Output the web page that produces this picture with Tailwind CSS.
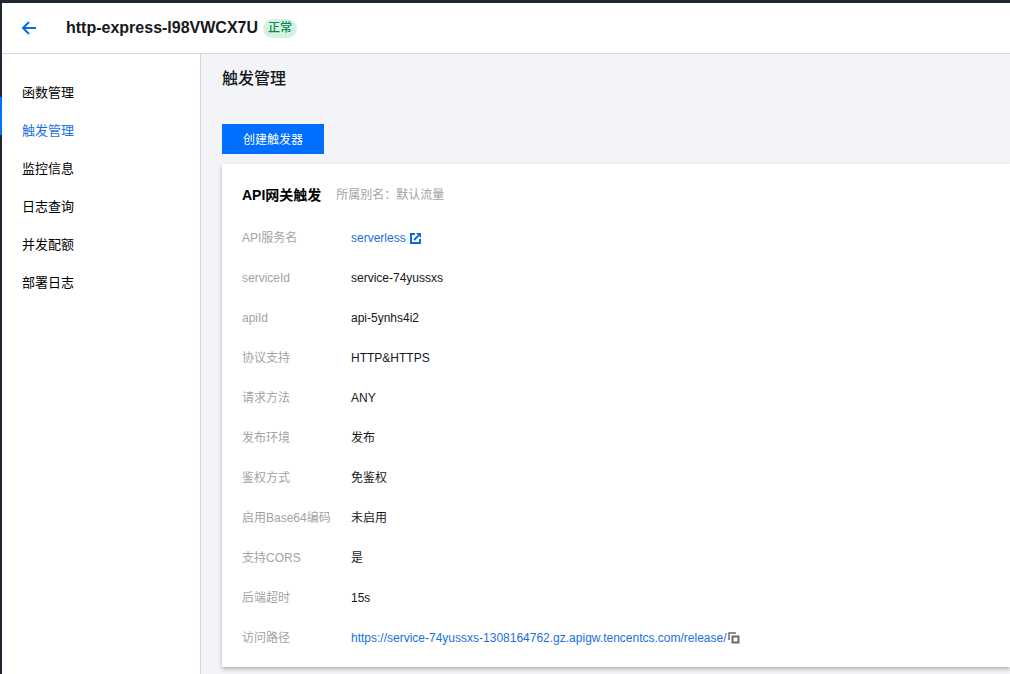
<!DOCTYPE html>
<html lang="en">
<head>
  <meta charset="UTF-8" />
  <title>http-express</title>
  <script src="https://cdn.jsdelivr.net/npm/@tailwindcss/browser@4"></script>
</head>
<body class="h-[674px] w-[1010px] overflow-hidden bg-[#f2f4f8] font-['Liberation_Sans','Noto_Sans_CJK_SC',sans-serif]">
  <div class="flex h-full flex-col border-t-[3px] border-l-2 border-[#1f2733]">
    <!-- Header -->
    <header class="flex h-[51px] shrink-0 items-center border-b border-[#d5d8de] bg-white pl-[19px]">
      <svg class="h-4 w-4" viewBox="0 0 16 16" fill="none" stroke="#0a6ae6" stroke-width="2">
        <path d="M15 8H2M8 2 2 8l6 6" />
      </svg>
      <h1 class="ml-[29px] text-base leading-6 font-bold text-[#16181c]">http-express-l98VWCX7U</h1>
      <span class="ml-[5px] rounded-full bg-[#d5f3e3] px-[5px] text-xs leading-[19px] font-medium text-[#0c8a4a]">正常</span>
    </header>

    <div class="flex min-h-0 flex-1">
      <!-- Sidebar -->
      <nav class="relative w-[199px] shrink-0 border-r border-[#d5d8de] bg-white pt-5 text-[13px] text-black">
        <span class="absolute top-[43px] -left-[2px] h-[38px] w-[2px] bg-[#006eff]"></span>
        <a class="block h-[38px] pl-5 leading-[38px]">函数管理</a>
        <a class="block h-[38px] pl-5 leading-[38px] text-[#1a6fe0]">触发管理</a>
        <a class="block h-[38px] pl-5 leading-[38px]">监控信息</a>
        <a class="block h-[38px] pl-5 leading-[38px]">日志查询</a>
        <a class="block h-[38px] pl-5 leading-[38px]">并发配额</a>
        <a class="block h-[38px] pl-5 leading-[38px]">部署日志</a>
      </nav>

      <!-- Main -->
      <main class="min-w-0 flex-1 pl-[21px]">
        <h2 class="mt-[13px] text-base leading-6 font-medium text-[#16181c]">触发管理</h2>
        <button class="mt-[33px] block h-[30px] w-[102px] bg-[#006eff] pt-px text-xs text-white">创建触发器</button>

        <section class="mt-[10px] h-[503px] bg-white pt-[21px] pl-5 shadow-[0_2px_4px_rgba(0,0,0,0.28)]">
          <div class="flex h-[20px] items-center">
            <span class="text-sm font-bold text-black">API网关触发</span>
            <span class="ml-[15px] text-xs text-[#a3a3a3]">所属别名：默认流量</span>
          </div>
          <dl class="mt-[13px] text-xs">
            <div class="flex h-10 items-center">
              <dt class="w-[109px] text-[#a3a3a3]">API服务名</dt>
              <dd class="flex items-center text-[#1a6fe0]">
                serverless
                <svg class="ml-[4px] h-[11px] w-[11px]" viewBox="0 0 11 11" fill="none" stroke="#0a6ae6">
                  <path stroke-width="2" d="M5 1H1v9h9V6" />
                  <path fill="#0a6ae6" stroke="none" d="M6 0h5v5z" />
                  <path stroke-width="1.800" d="M8.500 2.500 4 7" />
                </svg>
              </dd>
            </div>
            <div class="flex h-10 items-center">
              <dt class="w-[109px] text-[#a3a3a3]">serviceId</dt>
              <dd class="text-[#16181c]">service-74yussxs</dd>
            </div>
            <div class="flex h-10 items-center">
              <dt class="w-[109px] text-[#a3a3a3]">apiId</dt>
              <dd class="text-[#16181c]">api-5ynhs4i2</dd>
            </div>
            <div class="flex h-10 items-center">
              <dt class="w-[109px] text-[#a3a3a3]">协议支持</dt>
              <dd class="text-[#16181c]">HTTP&amp;HTTPS</dd>
            </div>
            <div class="flex h-10 items-center">
              <dt class="w-[109px] text-[#a3a3a3]">请求方法</dt>
              <dd class="text-[#16181c]">ANY</dd>
            </div>
            <div class="flex h-10 items-center">
              <dt class="w-[109px] text-[#a3a3a3]">发布环境</dt>
              <dd class="text-[#16181c]">发布</dd>
            </div>
            <div class="flex h-10 items-center">
              <dt class="w-[109px] text-[#a3a3a3]">鉴权方式</dt>
              <dd class="text-[#16181c]">免鉴权</dd>
            </div>
            <div class="flex h-10 items-center">
              <dt class="w-[109px] text-[#a3a3a3]">启用Base64编码</dt>
              <dd class="text-[#16181c]">未启用</dd>
            </div>
            <div class="flex h-10 items-center">
              <dt class="w-[109px] text-[#a3a3a3]">支持CORS</dt>
              <dd class="text-[#16181c]">是</dd>
            </div>
            <div class="flex h-10 items-center">
              <dt class="w-[109px] text-[#a3a3a3]">后端超时</dt>
              <dd class="text-[#16181c]">15s</dd>
            </div>
            <div class="flex h-10 items-center">
              <dt class="w-[109px] text-[#a3a3a3]">访问路径</dt>
              <dd class="flex items-center text-[#1a6fe0]">
                https://service-74yussxs-1308164762.gz.apigw.tencentcs.com/release/
                <svg class="ml-[1px] h-[12px] w-[12px]" viewBox="0 0 12 12" fill="none" stroke="#6b6b6b">
                  <path stroke-width="1.500" d="M1 8V1h7" />
                  <path stroke-width="2" d="M4.500 4.500h6v6h-6z" />
                </svg>
              </dd>
            </div>
          </dl>
        </section>
      </main>
    </div>
  </div>
</body>
</html>
